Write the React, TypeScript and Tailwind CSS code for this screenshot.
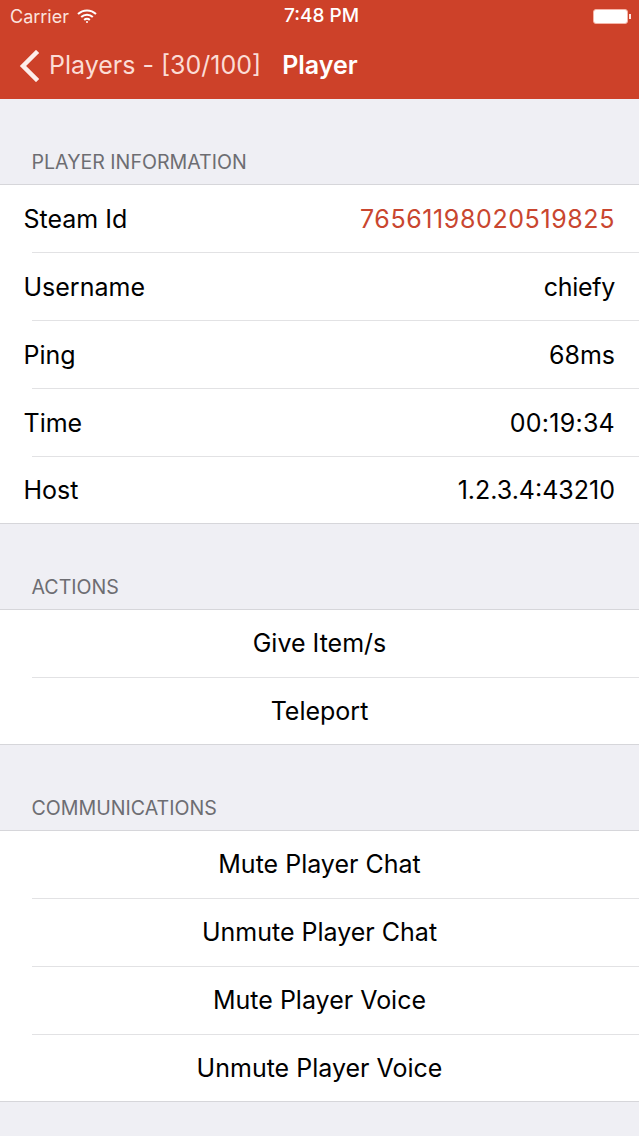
import React from 'react';

const Row = ({ label, value, valueClass, last }: { label: string; value: string; valueClass?: string; last?: boolean }) => (
  <div className={`flex items-center justify-between pl-[23.5px] pr-6 ${last ? 'h-[66px] pt-px' : 'h-[67px] pt-[2px]'}`}>
    <span className="text-[25px] text-black">{label}</span>
    <span className={`text-[25px] ${valueClass ?? 'text-black'}`}>{value}</span>
  </div>
);

const ActionRow = ({ label, last }: { label: string; last?: boolean }) => (
  <div className={`flex items-center justify-center text-[25px] text-black ${last ? 'h-[66px] pt-px' : 'h-[67px]'}`}>{label}</div>
);

const Group = ({ children }: { children: React.ReactNode }) => (
  <div className="flex flex-col border-y border-[#d6d6da] bg-white">{children}</div>
);

const Sep = () => <div className="ml-8 h-px bg-[#e2e2e4]" />;

const SectionLabel = ({ text }: { text: string }) => (
  <div className="flex h-[85px] items-end pb-[8px] pl-[31.5px] text-[19.6px] leading-[28px] text-[#6d6d72]">{text}</div>
);

export default function App() {
  return (
    <div className="flex h-[1136px] w-[639px] flex-col overflow-hidden bg-[#efeff4] font-['Inter','Liberation_Sans',sans-serif]">
      <div className="flex h-[99px] flex-col bg-[#cd4129] text-white">
        <div className="flex h-[33px] items-center justify-between pl-[10px] pr-[8px]">
          <div className="flex w-[221px] items-center gap-[8px]">
            <span className="text-[18px] text-[#fbe3de]">Carrier</span>
            <svg width="20" height="15" viewBox="0 0 20 15" fill="none" stroke="white" strokeWidth="2">
              <path d="M1 5a13 13 0 0 1 18 0" />
              <path d="M4.2 8a8.5 8.5 0 0 1 11.6 0" />
              <path d="M7.2 11a4 4 0 0 1 5.6 0" />
              <circle cx="10" cy="13" r="1" fill="white" stroke="none" />
            </svg>
          </div>
          <span className="text-[19px] font-medium">7:48 PM</span>
          <div className="flex w-[219px] items-center justify-end">
            <div className="h-[15px] w-[35px] rounded-[3px] border border-[#f5b5a8] bg-white" />
            <div className="ml-px h-[5px] w-[2px] bg-[#fbe3de]" />
          </div>
        </div>
        <div className="flex flex-1 items-center pb-[1px] pl-[19px]">
          <svg width="20" height="32" viewBox="0 0 20 32" fill="none" stroke="#fdeeea" strokeWidth="4.5" strokeLinecap="square">
            <path d="M17 3 L4 16 L17 29" />
          </svg>
          <span className="ml-[10px] text-[25px] text-[#fbdcd5]">Players - [30/100]</span>
          <span className="ml-[21px] text-[25px] font-semibold">Player</span>
        </div>
      </div>

      <SectionLabel text="PLAYER INFORMATION" />
      <Group>
        <Row label="Steam Id" value="76561198020519825" valueClass="text-[#c9462f] tracking-[0.6px]" />
        <Sep />
        <Row label="Username" value="chiefy" valueClass="text-black tracking-[-0.3px]" />
        <Sep />
        <Row label="Ping" value="68ms" />
        <Sep />
        <Row label="Time" value="00:19:34" valueClass="text-black tracking-[0.25px]" />
        <Sep />
        <Row label="Host" value="1.2.3.4:43210" last />
      </Group>

      <SectionLabel text="ACTIONS" />
      <Group>
        <ActionRow label="Give Item/s" />
        <Sep />
        <ActionRow label="Teleport" last />
      </Group>

      <SectionLabel text="COMMUNICATIONS" />
      <Group>
        <ActionRow label="Mute Player Chat" />
        <Sep />
        <ActionRow label="Unmute Player Chat" />
        <Sep />
        <ActionRow label="Mute Player Voice" />
        <Sep />
        <ActionRow label="Unmute Player Voice" last />
      </Group>
    </div>
  );
}
